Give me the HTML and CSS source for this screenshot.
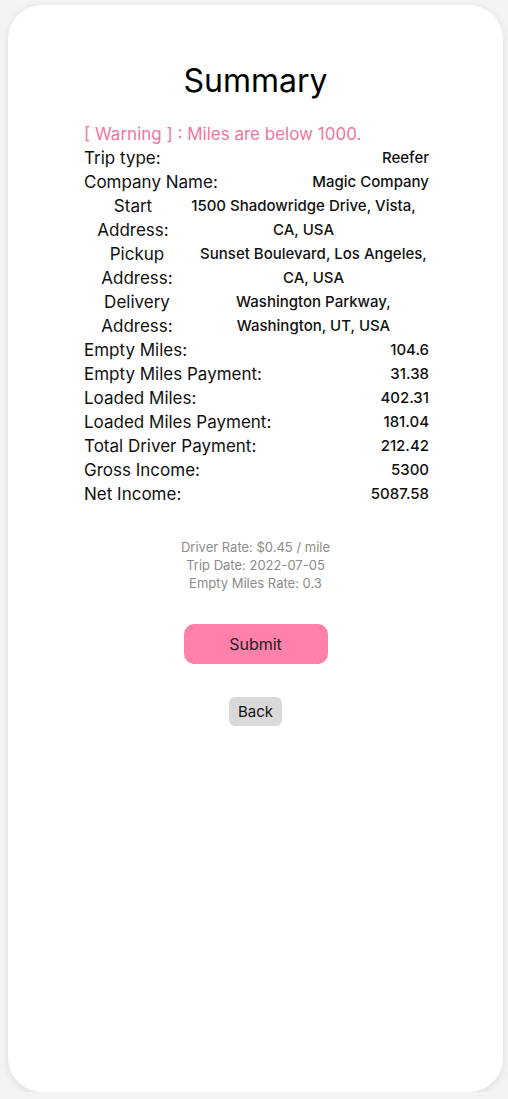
FILE: index.html
```html
<!DOCTYPE html>
<html>
<head>
<meta charset="utf-8">
<link rel="stylesheet" href="styles.css">
</head>
<body>
<div class="card">
  <h1 class="title">Summary</h1>
  <div class="summary">
    <div class="warning">[ Warning ] : Miles are below 1000.</div>
    <div class="row"><span class="label">Trip type:</span><span class="value">Reefer</span></div>
    <div class="row"><span class="label">Company Name:</span><span class="value">Magic Company</span></div>
    <div class="addr addr-start"><span class="label">Start Address:</span><span class="value">1500 Shadowridge Drive, Vista, CA, USA</span></div>
    <div class="addr"><span class="label">Pickup Address:</span><span class="value">Sunset Boulevard, Los Angeles, CA, USA</span></div>
    <div class="addr"><span class="label">Delivery Address:</span><span class="value">Washington Parkway, Washington, UT, USA</span></div>
    <div class="row"><span class="label">Empty Miles:</span><span class="value">104.6</span></div>
    <div class="row"><span class="label">Empty Miles Payment:</span><span class="value">31.38</span></div>
    <div class="row"><span class="label">Loaded Miles:</span><span class="value">402.31</span></div>
    <div class="row"><span class="label">Loaded Miles Payment:</span><span class="value">181.04</span></div>
    <div class="row"><span class="label">Total Driver Payment:</span><span class="value">212.42</span></div>
    <div class="row"><span class="label">Gross Income:</span><span class="value">5300</span></div>
    <div class="row"><span class="label">Net Income:</span><span class="value">5087.58</span></div>
  </div>
  <div class="notes">
    <div>Driver Rate: $0.45 / mile</div>
    <div>Trip Date: 2022-07-05</div>
    <div>Empty Miles Rate: 0.3</div>
  </div>
  <button class="submit">Submit</button>
  <button class="back">Back</button>
</div>
</body>
</html>
```
FILE: styles.css
```css
html, body {
  margin: 0;
  padding: 0;
}
body {
  background: #f4f4f4;
  font-family: "Inter", "Noto Sans", sans-serif;
  color: #111;
}
.card {
  box-sizing: border-box;
  width: 495px;
  height: 1087px;
  margin: 5px 0 0 8px;
  background: #fff;
  border-radius: 34px;
  box-shadow: 0 2px 8px rgba(0,0,0,0.10);
  display: flex;
  flex-direction: column;
  align-items: center;
  padding-top: 56px;
}
.title {
  margin: 0;
  font-size: 32px;
  font-weight: 400;
  line-height: 40px;
  color: #000;
}
.summary {
  width: 345px;
  margin-top: 21px;
  margin-left: 2px;
}
.warning {
  color: #ec77a0;
  font-size: 17px;
  line-height: 24px;
}
.row {
  display: flex;
  justify-content: space-between;
  line-height: 24px;
}
.label {
  font-size: 17px;
  font-weight: 400;
}
.value {
  font-size: 15px;
  font-weight: 500;
}
.addr {
  display: grid;
  grid-template-columns: 106px 1fr;
  line-height: 24px;
  text-align: center;
}
.addr .value {
  padding: 0 0 0 8px;
}
.addr-start {
  grid-template-columns: 98px 1fr;
}
.addr-start .value {
  padding: 0 4px 0 0;
}
.notes {
  margin-top: 32px;
  font-size: 13px;
  line-height: 18px;
  color: #8c8c8c;
  text-align: center;
}
.submit {
  margin-top: 32px;
  width: 144px;
  height: 40px;
  border: none;
  border-radius: 10px;
  background: #ff80aa;
  color: #222;
  font-family: inherit;
  font-size: 16px;
}
.back {
  margin-top: 33px;
  width: 53px;
  height: 29px;
  border: none;
  border-radius: 6px;
  background: #d9d9d9;
  color: #111;
  font-family: inherit;
  font-size: 15px;
}
```
